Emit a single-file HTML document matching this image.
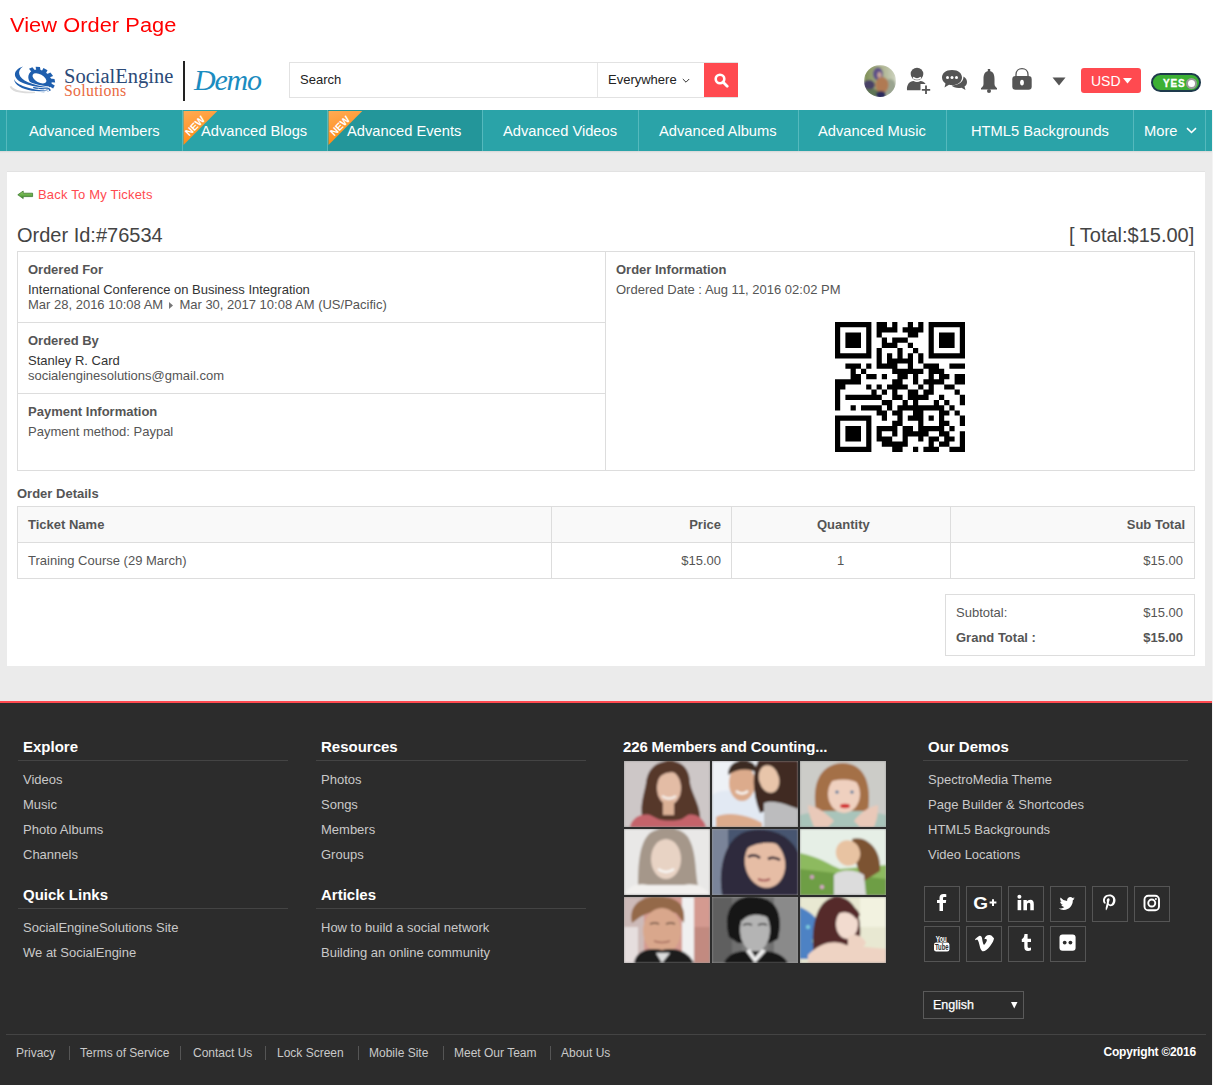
<!DOCTYPE html>
<html><head><meta charset="utf-8">
<style>
*{box-sizing:border-box;margin:0;padding:0}
html,body{width:1213px;height:1085px;overflow:hidden;background:#fff}
body{position:relative;font-family:"Liberation Sans",sans-serif;color:#555}
.a{position:absolute;white-space:nowrap;line-height:1}
#title{left:10px;top:15px;font-size:20px;color:#f00;letter-spacing:0.05px;transform:scaleX(1.09);transform-origin:0 0}
/* header */
#srch{left:289px;top:62px;width:449px;height:36px;border:1px solid #e2e2e2;background:#fff}
#srch .t{left:10px;top:10px;font-size:13px;color:#222}
#evw{left:307px;top:0;width:106px;height:34px;border-left:1px solid #e6e6e6}
#evw .t{left:10px;top:10px;font-size:13px;color:#222}
#sbtn{left:414px;top:0;width:34px;height:34px;background:#ff4a50}
#usd{left:1081px;top:68px;width:60px;height:25px;background:#ff4a50;border-radius:3px}
#usd .t{left:10px;top:6px;font-size:14px;color:#fff}
#tog{left:1151px;top:73px;width:50px;height:19px;border-radius:10px;background:#3cb034;border:2px solid #1e3a4c}
/* nav */
#nav{left:0;top:110px;width:1212px;height:41px;background:#2aa3a8}
#nav .it{position:absolute;top:0;height:41px;border-left:1px solid #55b9bd}
#nav .it span{position:absolute;top:14px;font-size:14.7px;color:#fff;white-space:nowrap;line-height:1}
#navsh{left:0;top:151px;width:1212px;height:2px;background:linear-gradient(#d6d6d6,#ebebeb)}
#gray{left:0;top:151px;width:1212px;height:550px;background:#ebebeb}
#box{left:7px;top:172px;width:1198px;height:494px;background:#fff;box-shadow:0 -1px 0 #e2e2e2}
#redl{left:0;top:701px;width:1212px;height:2px;background:#ff4a50}
#foot{left:0;top:703px;width:1212px;height:382px;background:#2c2c2c}
.b{font-size:13px;font-weight:bold;color:#555}
.r{font-size:13px;color:#555}
.fh{font-size:15px;font-weight:bold;color:#fff}
.fd{height:1px;background:#444}
.fl{font-size:13px;color:#c9c9c9}
.bl{font-size:12px;color:#c9c9c9}
.ph{width:86px;height:66px;overflow:hidden;background:#999}
.sb{width:36px;height:36px;border:1px solid #555}
#rstrip{left:1212px;top:110px;width:1px;height:975px;background:#f4f4f4}
</style></head><body><svg width="0" height="0" style="position:absolute"><defs><filter id="bl" x="-5%" y="-5%" width="110%" height="110%"><feGaussianBlur stdDeviation="1.2"/></filter></defs></svg>
<div class="a" id="title">View Order Page</div>

<!-- logo -->
<div class="a" id="logo" style="left:0;top:55px;width:270px;height:50px">
  <svg class="a" style="left:8px;top:5px" width="60" height="40" viewBox="0 0 60 40">
    <path d="M2.5 26.5 C4 31 14 33 27 32.3 C17 33.2 6 31.5 2.5 26.5 Z" fill="none" stroke="#dcdcdc" stroke-width="1.6"/>
    <g transform="translate(32 19.5) rotate(28) scale(1 0.74)" fill="#1f5fae">
      <circle r="12.3"/>
      <g id="tth"><rect x="-2.3" y="-15.8" width="4.6" height="5"/></g>
      <use href="#tth" transform="rotate(30)"/><use href="#tth" transform="rotate(60)"/><use href="#tth" transform="rotate(90)"/>
      <use href="#tth" transform="rotate(120)"/><use href="#tth" transform="rotate(150)"/><use href="#tth" transform="rotate(180)"/>
      <use href="#tth" transform="rotate(-30)"/><use href="#tth" transform="rotate(-60)"/>
      <ellipse cx="-1" cy="-1" rx="7.6" ry="5.4" fill="#fff"/>
    </g>
    <path d="M15 6.5 C4 10 3 20 20 24.8 C28 27 36 27.8 41 27.2 C34 26.8 26 25 20 22.3 C10 17.5 8.5 11 15 6.5 Z" fill="#1f5fae" stroke="#fff" stroke-width="1.6" paint-order="stroke"/>
    <path d="M6 19 C6.5 25 14 29.2 24 30.8 C30 31.6 36 31.3 41 30.4 C32 30.6 24 29.4 17 26.8 C11 24.6 7 22 6 19 Z" fill="#1f5fae" stroke="#fff" stroke-width="1.6" paint-order="stroke"/>
  </svg>
  <svg class="a" style="left:182px;top:5px" width="4" height="42"><rect x="1" y="1" width="2" height="40" fill="#222"/></svg>
  <div class="a" style="left:64px;top:11px;font-family:'Liberation Serif',serif;font-size:20.5px;color:#2b4a78">SocialEngine</div>
  <div class="a" style="left:64px;top:28px;font-family:'Liberation Serif',serif;font-size:15.8px;color:#ea6a3f;letter-spacing:0.3px">Solutions</div>
  <div class="a" style="left:194px;top:10px;font-family:'Liberation Serif',serif;font-style:italic;font-size:30px;color:#1b8cc0;letter-spacing:-1.2px">Demo</div>
</div>
</div>

<div class="a" id="srch">
  <div class="a t">Search</div>
  <div class="a" id="evw"><div class="a t">Everywhere</div><svg class="a" style="left:84px;top:15px" width="8" height="6" viewBox="0 0 8 6"><path d="M0.8 1 L4 4.2 L7.2 1" fill="none" stroke="#333" stroke-width="1"/></svg></div>
  <div class="a" id="sbtn"><svg class="a" style="left:10px;top:10px" width="15" height="15" viewBox="0 0 15 15"><circle cx="6" cy="6" r="4.3" fill="none" stroke="#fff" stroke-width="2.6"/><path d="M9 9 L13.2 13.2" stroke="#fff" stroke-width="2.8" stroke-linecap="round"/></svg></div>
</div>

<svg class="a" style="left:864px;top:65px" width="32" height="32" viewBox="0 0 32 32">
<defs><clipPath id="avc"><circle cx="16" cy="16" r="16"/></clipPath><linearGradient id="avg" x1="0" y1="0" x2="1" y2="0"><stop offset="0" stop-color="#7f9058"/><stop offset="0.5" stop-color="#a8ae88"/><stop offset="1" stop-color="#cdd3c0"/></linearGradient></defs>
<g clip-path="url(#avc)" filter="url(#bl)">
<rect width="32" height="32" fill="url(#avg)"/>
<ellipse cx="5" cy="20" rx="6" ry="5" fill="#4a4366"/>
<ellipse cx="8" cy="28" rx="8" ry="4" fill="#5f7555"/>
<ellipse cx="26" cy="22" rx="6" ry="8" fill="#9aa490"/>
<ellipse cx="14" cy="9" rx="5" ry="6.5" fill="#5d5088"/>
<ellipse cx="15.5" cy="10" rx="2.2" ry="3" fill="#c8a49a"/>
<ellipse cx="18" cy="20" rx="6.5" ry="8" fill="#b07a52"/>
<ellipse cx="17" cy="30" rx="5" ry="4" fill="#2c2b5c"/>
</g></svg>
<svg class="a" style="left:905px;top:66px" width="26" height="28" viewBox="0 0 26 28">
  <circle cx="12" cy="8" r="6.3" fill="#555"/>
  <path d="M8 11.5 Q12 14.5 16 11.5" stroke="#fff" stroke-width="1.6" fill="none"/>
  <path d="M2 24.3 C1.5 18.5 4.5 15.3 8.5 15 Q12 17 15.5 15 C19.5 15.3 22 18 22 24.3 Z" fill="#555"/>
  <rect x="15.5" y="18" width="11" height="11" fill="#fff"/>
  <path d="M21 19.5 V28 M16.8 23.8 H25.2" stroke="#555" stroke-width="1.8"/>
</svg>
<svg class="a" style="left:941px;top:69px" width="27" height="22" viewBox="0 0 27 22">
  <path d="M11 1 C4.5 1 1 4.5 1 8.5 C1 11 2.5 13 4.5 14.5 L3.5 18.5 L8 15.8 C9 16 10 16.1 11 16.1 C17.5 16.1 21 12.5 21 8.5 C21 4.5 17.5 1 11 1 Z" fill="#555"/>
  <path d="M22.5 7.5 C25 9 26 11 26 13 C26 15 25 16.5 23.5 17.5 L24.5 21 L20.5 18.7 C19.5 19 18.5 19 17.5 19 C14.5 19 12 18 10.5 16.5 C17.5 16.5 22.5 13 22.5 7.5 Z" fill="#555"/>
  <circle cx="6.5" cy="8.5" r="1.5" fill="#fff"/><circle cx="11" cy="8.5" r="1.5" fill="#fff"/><circle cx="15.5" cy="8.5" r="1.5" fill="#fff"/>
</svg>
<svg class="a" style="left:980px;top:67.5px" width="18" height="26" viewBox="0 0 18 26">
  <rect x="7.8" y="1" width="2.4" height="3" fill="#555"/>
  <path d="M9 3 C4.5 3 3.5 7 3.5 11 L3.5 16 C3.5 18 2 19.5 1 20 L1 21.5 L17 21.5 L17 20 C16 19.5 14.5 18 14.5 16 L14.5 11 C14.5 7 13.5 3 9 3 Z" fill="#555"/>
  <circle cx="9" cy="23" r="2" fill="#555"/>
</svg>
<svg class="a" style="left:1011px;top:67px" width="22" height="24" viewBox="0 0 22 24">
  <path d="M5 10 L5 7.5 C5 4 7.6 1.6 11 1.6 C14.4 1.6 17 4 17 7.5 L17 10" fill="none" stroke="#555" stroke-width="1.3"/>
  <rect x="1.3" y="9" width="19.4" height="13.8" rx="3.2" fill="#555"/>
  <ellipse cx="11" cy="15.6" rx="1.9" ry="2.9" fill="#fff"/>
</svg>
<svg class="a" style="left:1052px;top:77px" width="14" height="9" viewBox="0 0 14 9"><path d="M0.5 0.5 H13.5 L7 8.5 Z" fill="#555"/></svg>
<div class="a" id="usd"><div class="a t">USD</div><svg class="a" style="left:42px;top:10px" width="9" height="6" viewBox="0 0 9 6"><path d="M0 0 H9 L4.5 5.5 Z" fill="#fff"/></svg></div>
<div class="a" id="tog"><div class="a" style="left:10px;top:3.5px;font-size:10px;font-weight:bold;color:#fff;letter-spacing:0.8px;-webkit-text-stroke:0.3px #fff">YES</div><div class="a" style="left:33px;top:2.5px;width:11px;height:11px;border-radius:50%;background:#fff;border:2px solid #9a9a9a"></div></div>

<div class="a" id="nav">
  <div class="it" style="left:6px;width:176px"><span style="left:22px">Advanced Members</span></div>
  <div class="it" style="left:182px;width:145px"><svg class="a" style="left:0;top:1px" width="35" height="35" viewBox="0 0 35 35"><defs><linearGradient id="og" x1="0" y1="0" x2="0.3" y2="1"><stop offset="0" stop-color="#ffab55"/><stop offset="1" stop-color="#ff8a12"/></linearGradient></defs><path d="M0.5 0 H34.3 L0.5 34 Z" fill="url(#og)"/><text x="0" y="0" transform="translate(6.2 25.5) rotate(-45)" font-family="Liberation Sans" font-size="10" font-weight="bold" fill="#fff" letter-spacing="0">NEW</text></svg><span style="left:18px">Advanced Blogs</span></div>
  <div class="it" style="left:327px;width:155px;background:#23969a"><svg class="a" style="left:0;top:1px" width="35" height="35" viewBox="0 0 35 35"><defs><linearGradient id="og2" x1="0" y1="0" x2="0.3" y2="1"><stop offset="0" stop-color="#ffab55"/><stop offset="1" stop-color="#ff8a12"/></linearGradient></defs><path d="M0.5 0 H34.3 L0.5 34 Z" fill="url(#og2)"/><text x="0" y="0" transform="translate(6.2 25.5) rotate(-45)" font-family="Liberation Sans" font-size="10" font-weight="bold" fill="#fff" letter-spacing="0">NEW</text></svg><span style="left:19px">Advanced Events</span></div>
  <div class="it" style="left:482px;width:156px"><span style="left:20px">Advanced Videos</span></div>
  <div class="it" style="left:638px;width:160px"><span style="left:20px">Advanced Albums</span></div>
  <div class="it" style="left:798px;width:148px"><span style="left:19px">Advanced Music</span></div>
  <div class="it" style="left:946px;width:187px"><span style="left:24px">HTML5 Backgrounds</span></div>
  <div class="it" style="left:1133px;width:72px"><span style="left:10px">More</span><svg class="a" style="left:52px;top:17px" width="11" height="7" viewBox="0 0 11 7"><path d="M1 1.2 L5.5 5.5 L10 1.2" fill="none" stroke="#fff" stroke-width="1.6"/></svg></div>
  <div class="it" style="left:1205px;width:7px"></div>
</div>
<div class="a" id="gray"></div>
<div class="a" id="navsh"></div>
<div class="a" id="box"></div>

<div class="a" id="content" style="left:0;top:0;width:1213px;height:1085px">
<svg class="a" style="left:17px;top:190px" width="17" height="10" viewBox="0 0 17 10"><defs><linearGradient id="ag" x1="0" y1="0" x2="0" y2="1"><stop offset="0" stop-color="#9ad36a"/><stop offset="1" stop-color="#3c8c2c"/></linearGradient></defs><path d="M0.8 4.8 L6.2 1 L6.2 3.2 L15.6 3.2 L15.6 6.6 L6.2 6.6 L6.2 8.6 Z" fill="url(#ag)" stroke="#2f6e22" stroke-width="0.7"/></svg>
<div class="a" style="left:38px;top:188px;font-size:13px;color:#ff4a50;letter-spacing:0.2px">Back To My Tickets</div>
<div class="a" style="left:17px;top:225px;font-size:20px;color:#444">Order Id:#76534</div>
<div class="a" style="left:1069px;top:225px;font-size:20px;color:#444">[ Total:$15.00]</div>
<div class="a" style="left:17px;top:251px;width:1178px;height:220px;border:1px solid #ddd"></div>
<div class="a" style="left:605px;top:251px;width:1px;height:220px;background:#ddd"></div>
<div class="a" style="left:17px;top:322px;width:589px;height:1px;background:#ddd"></div>
<div class="a" style="left:17px;top:393px;width:589px;height:1px;background:#ddd"></div>
<div class="a b" style="left:28px;top:263px">Ordered For</div>
<div class="a r" style="left:28px;top:283px;color:#333">International Conference on Business Integration</div>
<div class="a r" style="left:28px;top:298px">Mar 28, 2016 10:08 AM <svg width="4" height="7" viewBox="0 0 4 7" style="vertical-align:0;margin:0 3px 0 2px"><path d="M0 0 L4 3.5 L0 7Z" fill="#777"/></svg> Mar 30, 2017 10:08 AM (US/Pacific)</div>
<div class="a b" style="left:28px;top:334px">Ordered By</div>
<div class="a r" style="left:28px;top:354px;color:#333">Stanley R. Card</div>
<div class="a r" style="left:28px;top:369px">socialenginesolutions@gmail.com</div>
<div class="a b" style="left:28px;top:405px">Payment Information</div>
<div class="a r" style="left:28px;top:425px">Payment method: Paypal</div>
<div class="a b" style="left:616px;top:263px">Order Information</div>
<div class="a r" style="left:616px;top:283px">Ordered Date : Aug 11, 2016 02:02 PM</div>
<svg class="a" style="left:835px;top:322px" width="130" height="130" viewBox="0 0 25 25"><path fill="#000" d="M0 0h7v1h-7zM8 0h2v1h-2zM11 0h1v1h-1zM14 0h1v1h-1zM16 0h1v1h-1zM18 0h7v1h-7zM0 1h1v1h-1zM6 1h1v1h-1zM8 1h4v1h-4zM13 1h4v1h-4zM18 1h1v1h-1zM24 1h1v1h-1zM0 2h1v1h-1zM2 2h3v1h-3zM6 2h1v1h-1zM8 2h1v1h-1zM14 2h2v1h-2zM18 2h1v1h-1zM20 2h3v1h-3zM24 2h1v1h-1zM0 3h1v1h-1zM2 3h3v1h-3zM6 3h1v1h-1zM9 3h1v1h-1zM11 3h3v1h-3zM18 3h1v1h-1zM20 3h3v1h-3zM24 3h1v1h-1zM0 4h1v1h-1zM2 4h3v1h-3zM6 4h1v1h-1zM9 4h3v1h-3zM14 4h1v1h-1zM18 4h1v1h-1zM20 4h3v1h-3zM24 4h1v1h-1zM0 5h1v1h-1zM6 5h1v1h-1zM8 5h1v1h-1zM12 5h1v1h-1zM15 5h1v1h-1zM18 5h1v1h-1zM24 5h1v1h-1zM0 6h7v1h-7zM8 6h1v1h-1zM10 6h1v1h-1zM12 6h1v1h-1zM14 6h1v1h-1zM16 6h1v1h-1zM18 6h7v1h-7zM8 7h1v1h-1zM10 7h5v1h-5zM16 7h1v1h-1zM2 8h3v1h-3zM6 8h1v1h-1zM8 8h4v1h-4zM14 8h1v1h-1zM17 8h3v1h-3zM22 8h3v1h-3zM3 9h1v1h-1zM5 9h1v1h-1zM11 9h6v1h-6zM18 9h3v1h-3zM3 10h2v1h-2zM6 10h2v1h-2zM9 10h1v1h-1zM12 10h2v1h-2zM15 10h1v1h-1zM18 10h1v1h-1zM20 10h2v1h-2zM23 10h2v1h-2zM0 11h5v1h-5zM11 11h2v1h-2zM15 11h1v1h-1zM17 11h4v1h-4zM23 11h2v1h-2zM0 12h2v1h-2zM6 12h1v1h-1zM8 12h1v1h-1zM10 12h4v1h-4zM16 12h1v1h-1zM18 12h1v1h-1zM21 12h2v1h-2zM0 13h1v1h-1zM7 13h1v1h-1zM9 13h1v1h-1zM11 13h1v1h-1zM14 13h2v1h-2zM17 13h2v1h-2zM23 13h1v1h-1zM0 14h1v1h-1zM2 14h7v1h-7zM11 14h2v1h-2zM14 14h4v1h-4zM20 14h1v1h-1zM24 14h1v1h-1zM0 15h1v1h-1zM9 15h2v1h-2zM13 15h1v1h-1zM15 15h1v1h-1zM19 15h1v1h-1zM21 15h1v1h-1zM24 15h1v1h-1zM0 16h1v1h-1zM3 16h1v1h-1zM5 16h4v1h-4zM10 16h1v1h-1zM12 16h9v1h-9zM22 16h1v1h-1zM8 17h2v1h-2zM11 17h2v1h-2zM15 17h2v1h-2zM20 17h2v1h-2zM23 17h1v1h-1zM0 18h7v1h-7zM9 18h1v1h-1zM12 18h1v1h-1zM14 18h3v1h-3zM18 18h1v1h-1zM20 18h1v1h-1zM24 18h1v1h-1zM0 19h1v1h-1zM6 19h1v1h-1zM11 19h2v1h-2zM16 19h1v1h-1zM20 19h2v1h-2zM24 19h1v1h-1zM0 20h1v1h-1zM2 20h3v1h-3zM6 20h1v1h-1zM8 20h4v1h-4zM13 20h2v1h-2zM16 20h5v1h-5zM22 20h1v1h-1zM0 21h1v1h-1zM2 21h3v1h-3zM6 21h1v1h-1zM8 21h1v1h-1zM11 21h1v1h-1zM13 21h5v1h-5zM20 21h2v1h-2zM24 21h1v1h-1zM0 22h1v1h-1zM2 22h3v1h-3zM6 22h1v1h-1zM8 22h3v1h-3zM13 22h1v1h-1zM16 22h1v1h-1zM18 22h2v1h-2zM21 22h2v1h-2zM24 22h1v1h-1zM0 23h1v1h-1zM6 23h1v1h-1zM9 23h5v1h-5zM18 23h1v1h-1zM20 23h2v1h-2zM24 23h1v1h-1zM0 24h7v1h-7zM11 24h2v1h-2zM15 24h1v1h-1zM17 24h3v1h-3zM22 24h3v1h-3z"/></svg>
<div class="a b" style="left:17px;top:487px">Order Details</div>
<div class="a" style="left:17px;top:506px;width:1178px;height:73px;border:1px solid #ddd"></div>
<div class="a" style="left:18px;top:507px;width:1176px;height:35px;background:#f9f9f9"></div>
<div class="a" style="left:17px;top:542px;width:1178px;height:1px;background:#ddd"></div>
<div class="a" style="left:551px;top:506px;width:1px;height:73px;background:#ddd"></div>
<div class="a" style="left:731px;top:506px;width:1px;height:73px;background:#ddd"></div>
<div class="a" style="left:950px;top:506px;width:1px;height:73px;background:#ddd"></div>
<div class="a b" style="left:28px;top:518px">Ticket Name</div>
<div class="a b" style="right:492px;top:518px">Price</div>
<div class="a b" style="left:817px;top:518px">Quantity</div>
<div class="a b" style="right:28px;top:518px">Sub Total</div>
<div class="a r" style="left:28px;top:554px">Training Course (29 March)</div>
<div class="a r" style="right:492px;top:554px">$15.00</div>
<div class="a r" style="left:837px;top:554px">1</div>
<div class="a r" style="right:30px;top:554px">$15.00</div>
<div class="a" style="left:945px;top:594px;width:250px;height:62px;border:1px solid #ddd"></div>
<div class="a r" style="left:956px;top:606px">Subtotal:</div>
<div class="a r" style="right:30px;top:606px">$15.00</div>
<div class="a b" style="left:956px;top:631px">Grand Total :</div>
<div class="a b" style="right:30px;top:631px">$15.00</div>
</div>
<div class="a" id="redl"></div>
<div class="a" id="foot"></div>

<div class="a" id="ft" style="left:0;top:0;width:1213px;height:1085px">
<div class="a fh" style="left:23px;top:739px">Explore</div>
<div class="a fd" style="left:18px;top:760px;width:270px"></div>
<div class="a fl" style="left:23px;top:773px">Videos</div>
<div class="a fl" style="left:23px;top:798px">Music</div>
<div class="a fl" style="left:23px;top:823px">Photo Albums</div>
<div class="a fl" style="left:23px;top:848px">Channels</div>
<div class="a fh" style="left:23px;top:887px">Quick Links</div>
<div class="a fd" style="left:18px;top:908px;width:270px"></div>
<div class="a fl" style="left:23px;top:921px">SocialEngineSolutions Site</div>
<div class="a fl" style="left:23px;top:946px">We at SocialEngine</div>

<div class="a fh" style="left:321px;top:739px">Resources</div>
<div class="a fd" style="left:316px;top:760px;width:270px"></div>
<div class="a fl" style="left:321px;top:773px">Photos</div>
<div class="a fl" style="left:321px;top:798px">Songs</div>
<div class="a fl" style="left:321px;top:823px">Members</div>
<div class="a fl" style="left:321px;top:848px">Groups</div>
<div class="a fh" style="left:321px;top:887px">Articles</div>
<div class="a fd" style="left:316px;top:908px;width:270px"></div>
<div class="a fl" style="left:321px;top:921px">How to build a social network</div>
<div class="a fl" style="left:321px;top:946px">Building an online community</div>

<div class="a fh" style="left:623px;top:739px;letter-spacing:-0.15px">226 Members and Counting...</div>
<div class="a ph p00" style="left:624px;top:761px"><svg width="86" height="66" viewBox="0 0 86 66"><g filter="url(#bl)"><rect width="86" height="66" fill="#cdc7c7"/>
<path d="M20 62 C14 48 20 34 22 22 C24 6 34 0 46 0 C58 0 66 8 66 22 C68 34 78 46 76 62Z" fill="#56392b"/>
<ellipse cx="45" cy="27" rx="12" ry="17" fill="#e3bca5"/>
<path d="M34 14 C38 6 52 6 58 14 C52 10 40 10 34 18Z" fill="#56392b"/>
<rect x="39" y="40" width="11" height="14" fill="#dab095"/>
<path d="M6 66 C8 56 18 52 26 54 L34 58 C40 60 52 60 58 58 L64 54 C72 52 80 58 82 66Z" fill="#c4636b"/>
<path d="M38 35 Q45 40 52 35" stroke="#f4eee8" stroke-width="2.3" fill="none"/></g></svg></div>
<div class="a ph p01" style="left:712px;top:761px"><svg width="86" height="66" viewBox="0 0 86 66"><g filter="url(#bl)"><rect width="86" height="66" fill="#eef1f6"/>
<path d="M0 34 C10 26 30 30 52 36 L54 66 L0 66Z" fill="#e2e9f3"/>
<ellipse cx="30" cy="22" rx="13" ry="18" fill="#dcab8c"/>
<path d="M16 14 C16 3 25 -1 33 0 C41 0 45 4 45 12 C38 7 26 7 16 14Z" fill="#3a2a20"/>
<path d="M46 0 C40 12 40 32 48 52 L62 46 C70 48 76 54 86 56 L86 0Z" fill="#3f2b23"/>
<ellipse cx="57" cy="18" rx="10" ry="14" fill="#e8c5aa" transform="rotate(-15 57 18)"/>
<path d="M52 42 C62 38 76 44 86 48 L86 66 L52 66Z" fill="#bcbcbe"/>
<path d="M4 56 C16 50 36 54 50 62 L50 66 L4 66Z" fill="#dcab8c"/>
<path d="M24 30 Q30 35 36 30" stroke="#f8f4f0" stroke-width="2.4" fill="none"/></g></svg></div>
<div class="a ph p02" style="left:800px;top:761px"><svg width="86" height="66" viewBox="0 0 86 66"><g filter="url(#bl)"><rect width="86" height="66" fill="#ccccc8"/>
<path d="M0 54 C20 48 66 48 86 54 L86 66 L0 66Z" fill="#a9c4ba"/>
<path d="M16 50 C12 25 18 4 42 2 C64 2 72 22 68 50Z" fill="#a46f47"/>
<ellipse cx="44" cy="33" rx="16" ry="19" fill="#efd0bf"/>
<path d="M24 10 C36 4 56 6 66 18 L62 24 C50 16 36 18 26 22Z" fill="#a46f47"/>
<ellipse cx="45" cy="45" rx="5" ry="2.2" fill="#d2262a"/>
<circle cx="37" cy="31" r="1.6" fill="#3a6c98"/><circle cx="52" cy="31" r="1.6" fill="#3a6c98"/>
<path d="M8 44 C18 46 26 52 34 60 L28 66 L14 66 C10 56 8 50 8 44Z" fill="#e9c9b9"/>
<path d="M78 44 C68 46 60 52 54 60 L60 66 L74 66 C78 56 78 50 78 44Z" fill="#e9c9b9"/></g></svg></div>
<div class="a ph p10" style="left:624px;top:829px"><svg width="86" height="66" viewBox="0 0 86 66"><g filter="url(#bl)"><rect width="86" height="66" fill="#e9e8e7"/>
<path d="M14 66 C14 40 14 15 26 4 C36 -3 56 -3 64 8 C74 25 70 45 76 66Z" fill="#a5978a"/>
<ellipse cx="42" cy="30" rx="15" ry="20" fill="#e8d3c4"/>
<path d="M0 66 C5 56 15 54 24 56 L60 56 C68 54 80 56 86 66Z" fill="#f2f0ee"/>
<path d="M34 40 Q42 46 50 40" stroke="#f8f6f4" stroke-width="2.5" fill="none"/></g></svg></div>
<div class="a ph p11" style="left:712px;top:829px"><svg width="86" height="66" viewBox="0 0 86 66"><g filter="url(#bl)"><rect width="86" height="66" fill="#46546f"/>
<rect x="0" y="0" width="16" height="66" fill="#7a8499"/>
<path d="M10 66 C6 40 12 8 36 2 C60 -3 80 8 86 24 L86 66Z" fill="#2d2a3c"/>
<ellipse cx="53" cy="34" rx="20" ry="25" fill="#e6bda5" transform="rotate(-12 53 34)"/>
<path d="M32 14 C42 4 64 4 78 14 L74 18 C62 12 46 12 34 20Z" fill="#2d2a3c"/>
<path d="M36 28 Q42 24 48 29" stroke="#2a2030" stroke-width="2.6" fill="none"/>
<path d="M56 30 Q62 27 68 31" stroke="#2a2030" stroke-width="2.6" fill="none"/>
<path d="M46 50 Q52 53 58 50" stroke="#a65a5a" stroke-width="2" fill="none"/></g></svg></div>
<div class="a ph p12" style="left:800px;top:829px"><svg width="86" height="66" viewBox="0 0 86 66"><g filter="url(#bl)"><rect width="86" height="66" fill="#e6efe6"/>
<path d="M0 24 C20 28 30 36 40 40 L86 36 L86 66 L0 66Z" fill="#8dba5e"/>
<path d="M0 40 L86 50 L86 66 L0 66Z" fill="#6e9e44"/>
<circle cx="12" cy="48" r="2" fill="#d8a0c8"/><circle cx="22" cy="58" r="2" fill="#e0a8d0"/>
<path d="M52 10 C66 6 82 20 80 42 L64 52 C56 40 54 24 52 10Z" fill="#7b5232"/>
<ellipse cx="48" cy="24" rx="12" ry="13" fill="#e8c3a2" transform="rotate(-25 48 24)"/>
<path d="M34 46 C40 40 56 40 64 46 L66 66 L34 66Z" fill="#dcdcdc"/></g></svg></div>
<div class="a ph p20" style="left:624px;top:897px"><svg width="86" height="66" viewBox="0 0 86 66"><g filter="url(#bl)"><rect width="86" height="66" fill="#d49a90"/>
<rect x="0" y="0" width="20" height="66" fill="#cdbab8"/>
<rect x="0" y="30" width="14" height="36" fill="#e6dede"/>
<rect x="58" y="0" width="12" height="66" fill="#f0f0f0"/>
<rect x="70" y="30" width="16" height="36" fill="#c28a80"/>
<path d="M8 26 C4 8 18 -2 36 0 C54 0 62 8 60 26 L52 16 C40 12 26 14 16 20Z" fill="#94694a"/>
<ellipse cx="38" cy="34" rx="19" ry="23" fill="#d9a78c"/>
<path d="M10 66 C12 54 24 50 38 53 C52 50 64 54 70 66Z" fill="#1d1d1f"/>
<path d="M32 56 L38 66 L46 56Z" fill="#dcdcdc"/>
<path d="M26 27 Q31 25 35 27 M42 27 Q47 25 51 27" stroke="#6a5040" stroke-width="1.6" fill="none"/>
<path d="M30 44 Q38 47 46 44" stroke="#a87060" stroke-width="1.5" fill="none"/></g></svg></div>
<div class="a ph p21" style="left:712px;top:897px"><svg width="86" height="66" viewBox="0 0 86 66"><g filter="url(#bl)"><rect width="86" height="66" fill="#707070"/>
<rect x="0" y="0" width="20" height="66" fill="#5e5e5e"/>
<rect x="62" y="0" width="24" height="66" fill="#8a8a8a"/>
<path d="M17 40 C10 14 22 -2 42 0 C64 0 72 16 66 42 L58 46 L26 46Z" fill="#141414"/>
<ellipse cx="43" cy="33" rx="15" ry="22" fill="#b4b4b4"/>
<path d="M28 16 C34 8 52 8 60 16 L58 22 C50 16 36 16 30 24Z" fill="#141414"/>
<path d="M30 46 C36 58 50 58 56 46 L56 52 C50 60 36 60 30 52Z" fill="#7a7a7a"/>
<path d="M12 66 C16 56 26 54 34 54 L52 54 C62 54 72 58 76 66Z" fill="#181818"/>
<path d="M34 54 L43 66 L54 54 L50 52 L43 60 L38 52Z" fill="#eeeeee"/>
<path d="M31 28 Q36 26 40 28 M46 28 Q51 26 55 28" stroke="#333" stroke-width="1.6" fill="none"/></g></svg></div>
<div class="a ph p22" style="left:800px;top:897px"><svg width="86" height="66" viewBox="0 0 86 66"><g filter="url(#bl)"><rect width="86" height="66" fill="#e8e8d2"/>
<rect x="60" y="0" width="26" height="30" fill="#f2f2e0"/>
<path d="M0 10 C10 14 18 22 24 32 L22 62 L0 62Z" fill="#4d82c4"/>
<circle cx="8" cy="30" r="2" fill="#7fd0e0"/><circle cx="14" cy="44" r="2" fill="#a0e0c0"/>
<path d="M14 60 C10 30 16 4 34 0 C52 -2 62 16 60 40 L50 64 L24 64Z" fill="#552c2a"/>
<ellipse cx="47" cy="27" rx="11" ry="15" fill="#f2dbcf"/>
<path d="M36 14 C42 6 56 6 60 18 L56 22 C50 14 42 14 36 18Z" fill="#552c2a"/>
<path d="M8 58 C20 46 34 42 46 48 L86 52 L86 66 L8 66Z" fill="#eed3c3"/>
<path d="M48 40 C54 36 62 38 66 46 L60 54 L48 50Z" fill="#eed3c3"/></g></svg></div>

<div class="a fh" style="left:928px;top:739px">Our Demos</div>
<div class="a fd" style="left:923px;top:760px;width:265px"></div>
<div class="a fl" style="left:928px;top:773px">SpectroMedia Theme</div>
<div class="a fl" style="left:928px;top:798px">Page Builder &amp; Shortcodes</div>
<div class="a fl" style="left:928px;top:823px">HTML5 Backgrounds</div>
<div class="a fl" style="left:928px;top:848px">Video Locations</div>
<div class="a sb" style="left:924px;top:886px"><svg class="a" style="left:-1px;top:-1px" width="36" height="36" viewBox="0 0 36 36"><path d="M15.5 25 V17 H13 V14 H15.5 V11.8 C15.5 9.3 16.8 8 19.4 8 C20.6 8 21.5 8.1 22.3 8.2 V11 H20.5 C19.4 11 19 11.5 19 12.4 V14 H22.2 L21.8 17 H19 V25 Z" fill="#fff"/></svg></div>
<div class="a sb" style="left:966px;top:886px"><svg class="a" style="left:-1px;top:-1px" width="36" height="36" viewBox="0 0 36 36"><text x="7.3" y="24.2" font-family="Liberation Sans" font-weight="bold" font-size="19" fill="#fff" transform="scale(1 0.82) translate(0 3.6)">G</text><path d="M23.6 16.6 H30.4 M27 13.2 V20" stroke="#fff" stroke-width="2"/></svg></div>
<div class="a sb" style="left:1008px;top:886px"><svg class="a" style="left:-1px;top:-1px" width="36" height="36" viewBox="0 0 36 36"><rect x="9.6" y="14" width="3.6" height="10.2" fill="#fff"/><circle cx="11.4" cy="10.8" r="2" fill="#fff"/><path d="M15.4 24.2 V14 H18.8 V15.6 C19.6 14.4 20.8 13.7 22.4 13.7 C25 13.7 25.8 15.4 25.8 18.2 V24.2 H22.3 V18.8 C22.3 17.5 22 16.7 20.9 16.7 C19.7 16.7 19 17.5 19 18.9 V24.2 Z" fill="#fff"/></svg></div>
<div class="a sb" style="left:1050px;top:886px"><svg class="a" style="left:-1px;top:-1px" width="36" height="36" viewBox="0 0 36 36"><path d="M25 12.4 C24.4 12.7 23.8 12.8 23.2 12.9 C23.8 12.5 24.3 11.9 24.5 11.2 C23.9 11.6 23.3 11.8 22.6 12 C22 11.3 21.2 11 20.3 11 C18.5 11 17.1 12.4 17.1 14.2 C17.1 14.4 17.1 14.7 17.2 14.9 C14.5 14.8 12.2 13.5 10.6 11.5 C10.3 12 10.2 12.5 10.2 13.1 C10.2 14.2 10.8 15.2 11.6 15.8 C11.1 15.8 10.6 15.6 10.2 15.4 C10.2 17 11.3 18.3 12.8 18.6 C12.3 18.8 11.7 18.8 11.3 18.7 C11.7 20 12.9 20.9 14.3 21 C12.9 22 11.3 22.6 9.5 22.6 C9.2 22.6 9 22.6 8.7 22.5 C10.1 23.4 11.8 23.9 13.6 23.9 C19.5 23.9 22.8 19 22.8 14.7 V14.3 C23.5 13.8 24.1 13.2 24.5 12.5 Z" fill="#fff"/></svg></div>
<div class="a sb" style="left:1092px;top:886px"><svg class="a" style="left:-1px;top:-1px" width="36" height="36" viewBox="0 0 36 36"><path d="M17.6 8.5 C13.2 8.5 11 11.6 11 14.2 C11 15.8 11.6 17.2 12.9 17.7 C13.1 17.8 13.3 17.7 13.4 17.5 L13.6 16.7 C13.7 16.5 13.6 16.4 13.5 16.2 C13.1 15.7 12.9 15.2 12.9 14.4 C12.9 12.2 14.6 10.2 17.3 10.2 C19.7 10.2 21.1 11.7 21.1 13.7 C21.1 16.3 19.9 18.5 18.2 18.5 C17.3 18.5 16.6 17.7 16.8 16.8 C17.1 15.6 17.6 14.4 17.6 13.6 C17.6 12.9 17.2 12.3 16.4 12.3 C15.4 12.3 14.7 13.3 14.7 14.6 C14.7 15.5 15 16 15 16 L13.9 20.8 C13.5 22.2 13.8 24 13.9 24.3 L14.2 24.3 C14.3 24.1 15.4 22.8 15.8 21.3 L16.4 19.1 C16.7 19.7 17.6 20.2 18.6 20.2 C21.5 20.2 23.5 17.5 23.5 14 C23.5 11.2 21.1 8.5 17.6 8.5 Z" fill="#fff"/></svg></div>
<div class="a sb" style="left:1134px;top:886px"><svg class="a" style="left:-1px;top:-1px" width="36" height="36" viewBox="0 0 36 36"><rect x="10.5" y="9.8" width="14.5" height="14.5" rx="3.8" fill="none" stroke="#fff" stroke-width="1.9"/><circle cx="17.75" cy="17.05" r="3.5" fill="none" stroke="#fff" stroke-width="1.9"/><circle cx="21.9" cy="12.9" r="1" fill="#fff"/></svg></div>
<div class="a sb" style="left:924px;top:926px"><svg class="a" style="left:-1px;top:-1px" width="36" height="36" viewBox="0 0 36 36"><text x="11.8" y="15.6" font-family="Liberation Sans" font-weight="bold" font-size="8.5" fill="#fff" textLength="11" lengthAdjust="spacingAndGlyphs">You</text><rect x="10" y="16.4" width="15.4" height="9" rx="2.2" fill="#fff"/><text x="10.9" y="23.9" font-family="Liberation Sans" font-weight="bold" font-size="8.5" fill="#2c2c2c" textLength="13.6" lengthAdjust="spacingAndGlyphs">Tube</text></svg></div>
<div class="a sb" style="left:966px;top:926px"><svg class="a" style="left:-1px;top:-1px" width="36" height="36" viewBox="0 0 36 36"><path d="M28 13.3 C27.9 15.2 26.6 17.8 24 21.2 C21.3 24.6 19.1 26.3 17.2 26.3 C16.1 26.3 15.1 25.3 14.3 23.2 L12.8 17.6 C12.2 15.5 11.6 14.5 10.9 14.5 C10.8 14.5 10.4 14.7 9.7 15.2 L9 14.3 C9.7 13.6 10.5 12.9 11.3 12.2 C12.4 11.3 13.2 10.8 13.7 10.7 C15 10.6 15.8 11.5 16.1 13.4 C16.4 15.5 16.7 16.8 16.8 17.3 C17.2 19 17.6 19.8 18 19.8 C18.4 19.8 18.9 19.2 19.6 18 C20.4 16.9 20.7 16 20.8 15.4 C20.9 14.4 20.5 13.9 19.6 13.9 C19.2 13.9 18.8 14 18.3 14.2 C19.2 11.3 20.9 9.9 23.4 10 C25.3 10 26.2 11.2 28 13.3 Z" fill="#fff" transform="translate(0 -1)"/></svg></div>
<div class="a sb" style="left:1008px;top:926px"><svg class="a" style="left:-1px;top:-1px" width="36" height="36" viewBox="0 0 36 36"><path d="M16.5 8 H19.6 V12.7 H23 V15.9 H19.6 V20.2 C19.6 21.3 20 21.9 21 21.9 C21.6 21.9 22.3 21.7 23 21.4 V24.3 C22.2 24.7 21.2 24.9 20 24.9 C17.5 24.9 16.3 23.5 16.3 21 V15.9 H13.8 V13 C15.3 12.5 16.3 11 16.5 8 Z" fill="#fff"/></svg></div>
<div class="a sb" style="left:1050px;top:926px"><svg class="a" style="left:-1px;top:-1px" width="36" height="36" viewBox="0 0 36 36"><rect x="9.5" y="8.6" width="16.1" height="16.1" rx="3" fill="#fff"/><circle cx="14.7" cy="16.6" r="1.9" fill="#2c2c2c"/><circle cx="20.4" cy="16.6" r="1.9" fill="#2c2c2c"/></svg></div>
<div class="a" style="left:923px;top:991px;width:101px;height:28px;border:1px solid #5a5a5a;background:#2c2c2c"></div>
<div class="a" style="left:933px;top:999px;font-size:12.5px;color:#fff;-webkit-text-stroke:0.25px #fff">English</div>
<svg class="a" style="left:1011px;top:1001.5px" width="7" height="7" viewBox="0 0 7 7"><path d="M0 0H6.5L3.25 6.5Z" fill="#fff"/></svg>

<div class="a fd" style="left:6px;top:1034px;width:1200px"></div>
<div class="a bl" style="left:16px;top:1047px">Privacy</div>
<div class="a bl" style="left:80px;top:1047px">Terms of Service</div>
<div class="a bl" style="left:193px;top:1047px">Contact Us</div>
<div class="a bl" style="left:277px;top:1047px">Lock Screen</div>
<div class="a bl" style="left:369px;top:1047px">Mobile Site</div>
<div class="a bl" style="left:454px;top:1047px">Meet Our Team</div>
<div class="a bl" style="left:561px;top:1047px">About Us</div>
<div class="a" style="left:69px;top:1046px;width:1px;height:14px;background:#555"></div>
<div class="a" style="left:180px;top:1046px;width:1px;height:14px;background:#555"></div>
<div class="a" style="left:265px;top:1046px;width:1px;height:14px;background:#555"></div>
<div class="a" style="left:358px;top:1046px;width:1px;height:14px;background:#555"></div>
<div class="a" style="left:443px;top:1046px;width:1px;height:14px;background:#555"></div>
<div class="a" style="left:550px;top:1046px;width:1px;height:14px;background:#555"></div>
<div class="a" style="right:17px;top:1046px;font-size:12px;font-weight:bold;color:#fff;letter-spacing:-0.2px">Copyright &copy;2016</div>
</div>
<div class="a" id="rstrip"></div>
</body></html>
